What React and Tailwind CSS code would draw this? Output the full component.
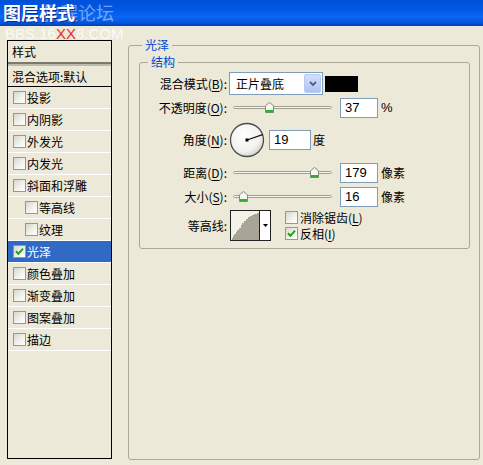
import React from "react";

const cjk = "font-['Noto_Sans_CJK_SC',sans-serif]";

// XP style checkbox
const Check = ({ checked }) => (
  <span className="flex h-[13px] w-[13px] shrink-0 items-center justify-center border border-[#8d9aa6] bg-linear-to-br from-[#d6d5cc] via-[#efefea] to-white">
    {checked && (
      <svg width="9" height="9" viewBox="0 0 9 9">
        <path d="M1 4.2 L3.4 6.8 L8 1.6" fill="none" stroke="#21a121" strokeWidth="2" />
      </svg>
    )}
  </span>
);

const U = ({ children }) => <span className="underline underline-offset-2">{children}</span>;

const Label = ({ children }) => (
  <div className="w-[87px] shrink-0 text-right text-[12px] leading-[14px] text-black">{children}</div>
);

const Num = ({ value, wide }) => (
  <div
    className={
      "h-[20px] shrink-0 border border-[#7f9db9] bg-white pl-[4px] font-['Liberation_Sans',sans-serif] text-[13px] leading-[18px] text-black " +
      (wide ? "w-[42px]" : "w-[38px]")
    }
  >
    {value}
  </div>
);

const Slider = ({ pos }) => (
  <div className="relative h-[20px] w-[103px] shrink-0">
    <div className="absolute left-[4px] right-0 top-[8px] h-[3px] rounded-full border border-[#a19f90] bg-[#f6f5f0]" />
    <svg
      className="absolute top-[4px]"
      style={{ left: 4 + pos * 99 - 4.5 }}
      width="9"
      height="11"
      viewBox="0 0 9 11"
    >
      <path d="M0.5 3.8 L4.5 0.5 L8.5 3.8 L8.5 10.5 L0.5 10.5 Z" fill="#f7f7f2" stroke="#7f8c7f" />
      <rect x="1" y="8" width="7" height="2.5" fill="#2fb02f" />
    </svg>
  </div>
);

const items = [
  { name: "投影" },
  { name: "内阴影" },
  { name: "外发光" },
  { name: "内发光" },
  { name: "斜面和浮雕" },
  { name: "等高线", indent: true },
  { name: "纹理", indent: true },
  { name: "光泽", checked: true, selected: true },
  { name: "颜色叠加" },
  { name: "渐变叠加" },
  { name: "图案叠加" },
  { name: "描边" },
];

export default function App() {
  return (
    <div className={"relative h-[465px] w-[483px] overflow-hidden bg-[#ECE9D8] " + cjk}>
      {/* title bar */}
      <div className="h-[26px] bg-[linear-gradient(to_bottom,#0050d8_0%,#0058e6_35%,#0a66f3_65%,#0254dc_88%,#003fb4_100%)]">
        <div className="relative z-10 pl-[3px] text-[18px] font-bold leading-[25px] text-white [text-shadow:1px_1px_0_#0a2a8a]">
          图层样式
        </div>
      </div>

      {/* watermarks */}
      <div className="absolute left-[42px] top-0 text-[18px] leading-[25px] text-white/45">教程论坛</div>
      <div className="absolute left-[5px] top-[26px] font-['Liberation_Sans',sans-serif] text-[15px] leading-[15px] text-[#fbfaf4]">
        BBS.16<span className="text-[#e5302b]">XX</span>8.COM
      </div>

      <div className="flex items-start">
        {/* left style list */}
        <div className="ml-[7px] mt-[14px] h-[419px] w-[105px] border border-black text-[12px] text-black">
          <div className="h-[21px] pl-[4px] leading-[21px]">样式</div>
          <div className="h-[4px] border-t-2 border-[#7b7a70] bg-[#bdbbae]" />
          <div className="h-[21px] border-b border-black pl-[4px] leading-[21px]">混合选项:默认</div>
          {items.map((it) => (
            <div
              key={it.name}
              className={
                "flex h-[22px] items-center gap-[1px] border-b border-white " +
                (it.indent ? "pl-[17px] " : "pl-[5px] ") +
                (it.selected ? "bg-[#316AC5] text-white" : "")
              }
            >
              <Check checked={it.checked} />
              <span className="leading-[14px]">{it.name}</span>
            </div>
          ))}
        </div>

        {/* right settings */}
        <fieldset className="ml-[16px] mt-[12px] h-[422px] w-[352px] rounded-[3px] border border-[#aca899]">
          <legend className="ml-[13px] px-[3px] text-[12px] leading-[14px] text-[#0046d5]">光泽</legend>
          <fieldset className="ml-[10px] mt-[3px] h-[194px] w-[331px] rounded-[3px] border border-[#aca899]">
            <legend className="ml-[8px] px-[3px] text-[12px] leading-[14px] text-[#0046d5]">结构</legend>
            <div className="flex flex-col pt-[3px]">
              {/* blend mode */}
              <div className="flex h-[23px] items-center">
                <Label>
                  混合模式(<U>B</U>):
                </Label>
                <div className="ml-[2px] flex h-[23px] w-[94px] items-center justify-between border border-[#7f9db9] bg-white pl-[6px] pr-[1px]">
                  <span className="text-[12px] leading-[14px] text-black">正片叠底</span>
                  <span className="flex h-[19px] w-[17px] items-center justify-center rounded-[2px] border border-[#b7c9f3] bg-linear-to-b from-[#d3def9] to-[#aec3f4]">
                    <svg width="8" height="6" viewBox="0 0 8 6">
                      <path d="M1 1 L4 4 L7 1" fill="none" stroke="#4d6185" strokeWidth="1.8" />
                    </svg>
                  </span>
                </div>
                <div className="ml-[2px] h-[16px] w-[33px] bg-black" />
              </div>

              {/* opacity */}
              <div className="mt-[3px] flex h-[20px] items-center">
                <Label>
                  不透明度(<U>O</U>):
                </Label>
                <div className="ml-[2px]">
                  <Slider pos={0.37} />
                </div>
                <div className="ml-[8px]">
                  <Num value="37" />
                </div>
                <span className="ml-[3px] font-['Liberation_Sans',sans-serif] text-[13px] leading-[14px] text-black">%</span>
              </div>

              {/* angle */}
              <div className="mt-[4px] flex h-[36px] items-center">
                <Label>
                  角度(<U>N</U>):
                </Label>
                <svg className="ml-[2px] shrink-0" width="36" height="36" viewBox="0 0 36 36">
                  <defs>
                    <radialGradient id="dial" cx="0.4" cy="0.35" r="0.7">
                      <stop offset="0" stopColor="#ffffff" />
                      <stop offset="0.7" stopColor="#f1f1ee" />
                      <stop offset="1" stopColor="#cfcfca" />
                    </radialGradient>
                  </defs>
                  <circle cx="18" cy="18" r="16.5" fill="url(#dial)" stroke="#4b4b4b" strokeWidth="1.3" />
                  <line x1="18" y1="18" x2="33.6" y2="12.6" stroke="#111" strokeWidth="1.2" />
                  <rect x="16.5" y="16.5" width="3" height="3" fill="#000" />
                </svg>
                <div className="ml-[4px]">
                  <Num value="19" wide />
                </div>
                <span className="ml-[2px] text-[12px] leading-[14px] text-black">度</span>
              </div>

              {/* distance */}
              <div className="mt-[5px] flex h-[20px] items-center">
                <Label>
                  距离(<U>D</U>):
                </Label>
                <div className="ml-[2px]">
                  <Slider pos={0.82} />
                </div>
                <div className="ml-[8px]">
                  <Num value="179" />
                </div>
                <span className="ml-[3px] text-[12px] leading-[14px] text-black">像素</span>
              </div>

              {/* size */}
              <div className="mt-[4px] flex h-[20px] items-center">
                <Label>
                  大小(<U>S</U>):
                </Label>
                <div className="ml-[2px]">
                  <Slider pos={0.11} />
                </div>
                <div className="ml-[8px]">
                  <Num value="16" />
                </div>
                <span className="ml-[3px] text-[12px] leading-[14px] text-black">像素</span>
              </div>

              {/* contour */}
              <div className="mt-[3px] flex h-[31px] items-center">
                <Label>等高线:</Label>
                <div className="ml-[3px] flex h-[31px] w-[41px] shrink-0 border border-[#222]">
                  <svg width="28" height="29" viewBox="0 0 28 29" className="bg-[#f3f1e8]">
                    <path
                      d="M1 29 L1 27 L2 27 L2 25 L3 25 L3 23 L5 23 L5 21 L6 21 L6 19 L8 19 L8 17 L10 17 L10 14 L11 14 L11 12 L13 12 L13 10 L15 10 L15 8 L17 8 L17 6 L19 6 L19 5 L21 5 L21 4 L23 4 L23 3 L26 3 L26 2 L28 2 L28 29 Z"
                      fill="#a8a597"
                    />
                  </svg>
                  <div className="flex w-[11px] items-center justify-center border-l border-[#222] bg-white">
                    <svg width="5" height="3" viewBox="0 0 5 3">
                      <path d="M0 0 L5 0 L2.5 3 Z" fill="#000" />
                    </svg>
                  </div>
                </div>
                <div className="ml-[14px] flex flex-col gap-[3px] text-[12px] leading-[13px] text-black">
                  <div className="flex items-center gap-[2px]">
                    <Check />
                    <span>
                      消除锯齿(<U>L</U>)
                    </span>
                  </div>
                  <div className="flex items-center gap-[2px]">
                    <Check checked />
                    <span>
                      反相(<U>I</U>)
                    </span>
                  </div>
                </div>
              </div>
            </div>
          </fieldset>
        </fieldset>
      </div>
    </div>
  );
}
